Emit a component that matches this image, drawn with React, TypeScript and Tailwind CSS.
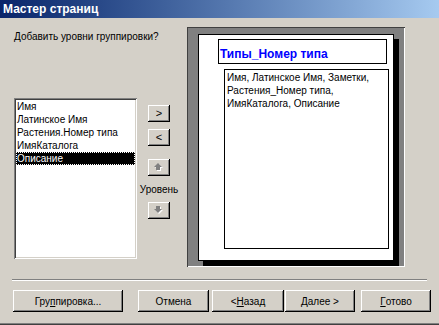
import React from 'react'

const FONT = { fontFamily: '"Liberation Sans", Arial, sans-serif' }

const FIELDS = ['Имя', 'Латинское Имя', 'Растения.Номер типа', 'ИмяКаталога', 'Описание']

const raised =
  'bg-[#d4d0c8] shadow-[inset_-1px_-1px_#000,inset_1px_1px_#fff,inset_-2px_-2px_#808080]'

function Btn({ w, children }: { w: string; children: React.ReactNode }) {
  return (
    <div className={`${w} h-[22px] flex items-center justify-center text-[10px] text-black ${raised}`}>
      {children}
    </div>
  )
}

function SmallBtn({ children }: { children: React.ReactNode }) {
  return (
    <div className={`w-[22px] h-[17px] flex items-center justify-center text-[11px] text-black ${raised}`}>
      {children}
    </div>
  )
}

function Arrow({ down }: { down?: boolean }) {
  // disabled arrow: gray with white emboss
  const d = down ? 'M2 0h4v3h2L4 7 0 3h2z' : 'M4 0l4 4H6v3H2V4H0z'
  return (
    <svg width="10" height="9" viewBox="0 0 10 9">
      <path d={d} transform="translate(1 1)" fill="#fff" />
      <path d={d} fill="#808080" />
    </svg>
  )
}

export default function App() {
  return (
    <div
      className="w-[439px] h-[325px] bg-[#d4d0c8] flex flex-col overflow-hidden shadow-[inset_0_-1px_#404040,inset_0_-2px_#808080]"
      style={FONT}
    >
      <div className="h-[18px] bg-gradient-to-r from-[#0a246a] to-[#a6caf0] flex items-center pl-[3px]">
        <span className="text-white font-bold text-[12px]">Мастер страниц</span>
      </div>

      <div className="flex pt-[9px]">
        <div className="w-[187px] pl-[14px]">
          <div className="text-[10px] leading-[13px] text-black mt-[3px]">Добавить уровни группировки?</div>
          <div className="flex mt-[55px]">
            <div className="w-[123px] h-[161px] bg-white pt-[2px] px-[2px] shadow-[inset_1px_1px_#808080,inset_-1px_-1px_#fff,inset_2px_2px_#404040,inset_-2px_-2px_#d4d0c8]">
              {FIELDS.map((f, i) =>
                i === 4 ? (
                  <div
                    key={f}
                    className="h-[13px] leading-[13px] text-[10px] bg-black text-white pl-[1px] outline-1 outline-dotted outline-white -outline-offset-1"
                  >
                    {f}
                  </div>
                ) : (
                  <div key={f} className="h-[13px] leading-[13px] text-[10px] text-black pl-[1px]">
                    {f}
                  </div>
                )
              )}
            </div>
            <div className="ml-[11px] mt-[7px] w-[22px] flex flex-col items-center">
              <SmallBtn>&gt;</SmallBtn>
              <div className="mt-[7px]">
                <SmallBtn>&lt;</SmallBtn>
              </div>
              <div className="mt-[13px]">
                <SmallBtn>
                  <Arrow />
                </SmallBtn>
              </div>
              <div className="mt-[7px] text-[10px] leading-[13px] whitespace-nowrap text-black">Уровень</div>
              <div className="mt-[6px]">
                <SmallBtn>
                  <Arrow down />
                </SmallBtn>
              </div>
            </div>
          </div>
        </div>

        <div className="w-[218px] h-[240px] bg-[#808080] pl-[11px] pt-[7px] shadow-[inset_1px_1px_#404040,inset_-1px_-1px_#fff]">
          <div className="w-[196px] h-[227px] bg-white border border-black shadow-[5px_5px_0_#000] flex flex-col">
            <div className="ml-[19px] mt-[4px] w-[169px] h-[25px] border border-black px-[1px] pt-[1px]">
              <span className="text-[12px] font-bold text-[#0000ff] leading-[14px]">Типы_Номер типа</span>
            </div>
            <div className="ml-[25px] mt-[5px] w-[165px] h-[180px] border border-black px-[2px] pt-[1px] text-[10px] leading-[13px] text-black">
              <div>Имя, Латинское Имя, Заметки,</div>
              <div>Растения_Номер типа,</div>
              <div>ИмяКаталога, Описание</div>
            </div>
          </div>
        </div>
      </div>

      <div className="mx-[12px] mt-[12px] h-[2px] border-t border-t-[#808080] border-b border-b-white" />

      <div className="flex mt-[9px] pl-[13px]">
        <Btn w="w-[110px]">
          Гру<u>п</u>пировка...
        </Btn>
        <div className="ml-[15px]">
          <Btn w="w-[71px]">Отмена</Btn>
        </div>
        <div className="ml-[3px]">
          <Btn w="w-[72px]">
            &lt; <u>Н</u>азад
          </Btn>
        </div>
        <div className="ml-[1px]">
          <Btn w="w-[70px]">
            <u>Д</u>алее &gt;
          </Btn>
        </div>
        <div className="ml-[6px]">
          <Btn w="w-[70px]">
            <u>Г</u>отово
          </Btn>
        </div>
      </div>
    </div>
  )
}
